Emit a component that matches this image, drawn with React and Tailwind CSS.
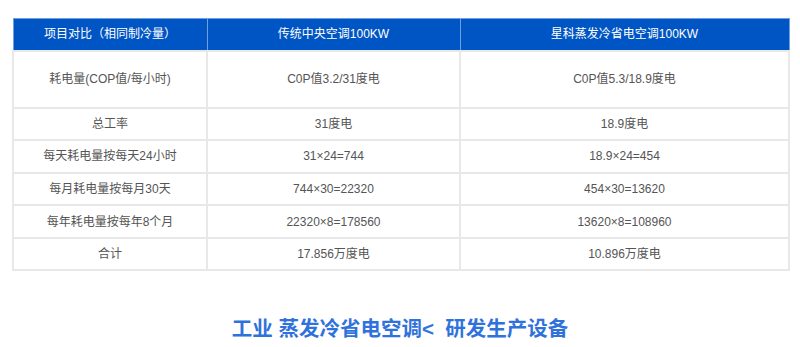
import React from "react";

const rows = [
  ["耗电量(COP值/每小时)", "C0P值3.2/31度电", "C0P值5.3/18.9度电", true],
  ["总工率", "31度电", "18.9度电"],
  ["每天耗电量按每天24小时", "31×24=744", "18.9×24=454"],
  ["每月耗电量按每月30天", "744×30=22320", "454×30=13620"],
  ["每年耗电量按每年8个月", "22320×8=178560", "13620×8=108960"],
  ["合计", "17.856万度电", "10.896万度电"],
];

const App = () => {
  return (
    <div
      className="w-[800px] h-[347px] bg-white overflow-hidden"
      style={{ fontFamily: '"Liberation Sans", "Noto Sans CJK SC", sans-serif' }}
    >
      <div className="pt-[18px] pl-[12px]">
        <table className="w-[776px] table-fixed border-collapse text-[12px] text-[#555]">
          <colgroup>
            <col className="w-[194px]" />
            <col className="w-[253px]" />
            <col className="w-[329px]" />
          </colgroup>
          <thead>
            <tr className="h-[32px] bg-[#0055c4] text-white">
              <th className="font-normal border border-[#6f9fe0]">项目对比（相同制冷量）</th>
              <th className="font-normal border border-[#6f9fe0]">传统中央空调100KW</th>
              <th className="font-normal border border-[#6f9fe0]">星科蒸发冷省电空调100KW</th>
            </tr>
          </thead>
          <tbody>
            {rows.map(([a, b, c, tall]) => (
              <tr key={a} className={tall ? "h-[57px]" : "h-[32.6px]"}>
                <td className="text-center border-2 border-[#e8e8e8]">{a}</td>
                <td className="text-center border-2 border-[#e8e8e8]">{b}</td>
                <td className="text-center border-2 border-[#e8e8e8]">{c}</td>
              </tr>
            ))}
          </tbody>
        </table>
      </div>
      <h2 className="mt-[44px] text-center text-[20.5px] font-bold text-[#2f72dc] leading-[28px]">
        工业 蒸发冷省电空调&lt;&nbsp; 研发生产设备
      </h2>
    </div>
  );
};

export default App;
